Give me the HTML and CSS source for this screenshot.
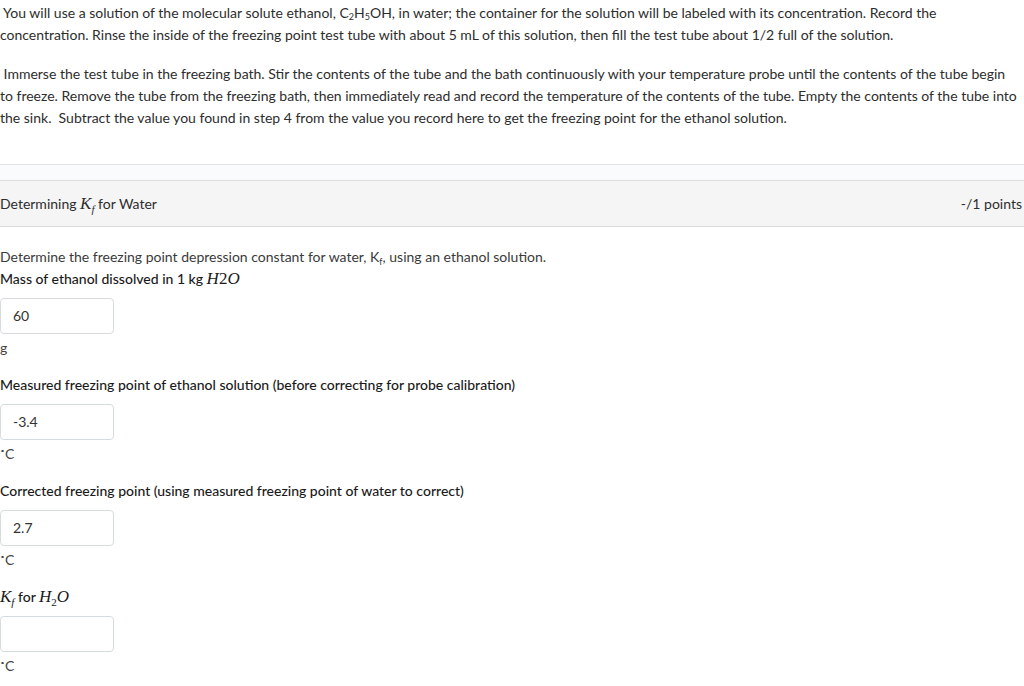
FILE: index.html
```html
<!DOCTYPE html>
<html>
<head>
<meta charset="utf-8">
<link rel="stylesheet" href="styles.css">
</head>
<body>
<div class="page">
  <p class="para p1">&nbsp;You will use a solution of the molecular solute ethanol, C<sub>2</sub>H<sub>5</sub>OH, in water; the container for the solution will be labeled with its concentration. Record the concentration. Rinse the inside of the freezing point test tube with about 5 mL of this solution, then fill the test tube about 1/2 full of the solution.</p>
  <p class="para p2">&nbsp;Immerse the test tube in the freezing bath. Stir the contents of the tube and the bath continuously with your temperature probe until the contents of the tube begin to freeze. Remove the tube from the freezing bath, then immediately read and record the temperature of the contents of the tube. Empty the contents of the tube into the sink.&nbsp; Subtract the value you found in step 4 from the value you record here to get the freezing point for the ethanol solution.</p>

  <div class="spacer-band"></div>
  <div class="q-header">
    <span class="q-title">Determining <span class="math"><i>K</i><sub><i>f</i></sub></span> for Water</span>
    <span class="q-points">-/1 points</span>
  </div>

  <div class="q-body">
    <p class="intro">Determine the freezing point depression constant for water, K<sub class="ksub">f</sub>, using an ethanol solution.</p>

    <div class="field">
      <div class="label">Mass of ethanol dissolved in 1 kg <span class="math"><i>H</i>2<i>O</i></span></div>
      <div class="input">60</div>
      <div class="unit">g</div>
    </div>

    <div class="field">
      <div class="label">Measured freezing point of ethanol solution (before correcting for probe calibration)</div>
      <div class="input">-3.4</div>
      <div class="unit"><sup class="deg">&#8728;</sup>C</div>
    </div>

    <div class="field">
      <div class="label">Corrected freezing point (using measured freezing point of water to correct)</div>
      <div class="input">2.7</div>
      <div class="unit"><sup class="deg">&#8728;</sup>C</div>
    </div>

    <div class="field">
      <div class="label"><span class="math"><i>K</i><sub><i>f</i></sub></span> for <span class="math"><i>H</i><sub>2</sub><i>O</i></span></div>
      <div class="input"></div>
      <div class="unit"><sup class="deg">&#8728;</sup>C</div>
    </div>
  </div>
</div>
</body>
</html>
```

FILE: styles.css
```css
html, body {
  margin: 0;
  padding: 0;
  background: #ffffff;
}

body {
  font-family: "Lato", "Open Sans", sans-serif;
  font-size: 14px;
  line-height: 22px;
  color: #2d2d2d;
}

.page {
  width: 1024px;
  padding-top: 2px;
}

.para {
  margin: 0;
  padding-right: 5px;
}

.p1 {
  margin-bottom: 17px;
}

.para sub {
  font-size: 9px;
  line-height: 0;
  vertical-align: -2px;
}

.spacer-band {
  margin-top: 35px;
  height: 15px;
  background: #fafbfc;
  border-top: 1px solid #e2e4e6;
  border-bottom: 1px solid #dcdee0;
}

.q-header {
  height: 45px;
  display: flex;
  align-items: center;
  justify-content: space-between;
  background: #f5f5f5;
  border-bottom: 1px solid #d9dbdd;
  padding-right: 2px;
}

.math {
  font-family: "Liberation Serif", "DejaVu Serif", serif;
  font-size: 17px;
}

.math sub {
  font-size: 11px;
  line-height: 0;
  vertical-align: -4px;
}

.q-body {
  padding-top: 19px;
}

.intro {
  margin: 0;
  color: #3a3a3a;
}

.ksub {
  font-size: 9px;
  line-height: 0;
  vertical-align: -3px;
}

.field {
  margin-bottom: 15px;
}

.label {
  color: #1a1a1a;
  font-weight: 500;
}

.input {
  margin-top: 8px;
  width: 100px;
  height: 34px;
  padding-left: 12px;
  border: 1px solid #d6dbe0;
  border-radius: 4px;
  line-height: 34px;
  color: #333;
  box-sizing: content-box;
}

.unit {
  margin-top: 3px;
  color: #444;
}

.deg {
  font-size: 8px;
  line-height: 0;
  vertical-align: 5px;
}
```
